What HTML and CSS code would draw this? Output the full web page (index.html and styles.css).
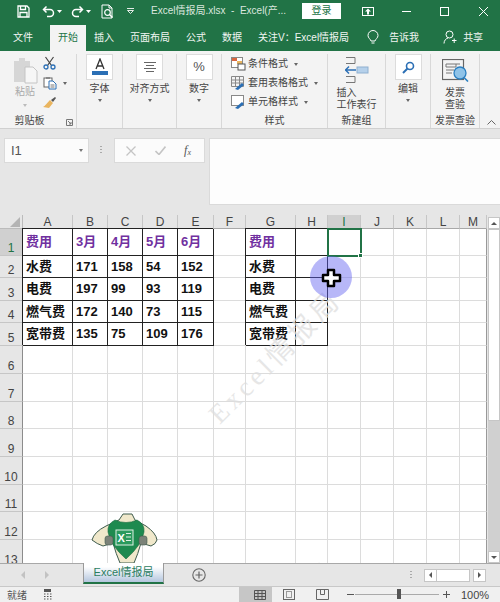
FILE: index.html
```html
<!DOCTYPE html>
<html lang="zh-CN">
<head>
<meta charset="utf-8">
<title>Excel情报局</title>
<link rel="stylesheet" href="styles.css">
</head>
<body>
<div class="app">
  <header class="titlebar">
    <svg class="qa save" width="13" height="13" viewBox="0 0 13 13"><path d="M1 1h9l2 2v9H1z M3.500 1v3.500h5V1 M3 12V7.500h7V12" fill="none" stroke="#fff" stroke-width="1.300"/></svg>
    <svg class="qa undo" width="13" height="13" viewBox="0 0 13 13"><path d="M4.500 1.500L1.500 4.500l3 3 M1.500 4.500H8a3.500 3.500 0 0 1 0 7H5" fill="none" stroke="#fff" stroke-width="1.500"/></svg>
    <svg class="qa mini" width="5" height="3" viewBox="0 0 5 3"><path d="M0 0h5L2.500 3z" fill="#fff"/></svg>
    <svg class="qa redo" width="13" height="13" viewBox="0 0 13 13"><path d="M8.500 1.500l3 3-3 3 M11.500 4.500H5a3.500 3.500 0 0 0 0 7h3" fill="none" stroke="#fff" stroke-width="1.500"/></svg>
    <svg class="qa mini" width="5" height="3" viewBox="0 0 5 3"><path d="M0 0h5L2.500 3z" fill="#fff"/></svg>
    <svg class="qa prev" width="13" height="15" viewBox="0 0 13 15"><path d="M8 1H1v13h10V4z M8 1v3h3" fill="none" stroke="#fff"/><circle cx="6.500" cy="8.500" r="2.800" fill="none" stroke="#fff" stroke-width="1.200"/><path d="M8.500 10.500l3 3" stroke="#fff" stroke-width="1.500"/></svg>
    <svg class="qa drop" width="7" height="6" viewBox="0 0 7 6"><path d="M0 .5h7M.5 2.500h6L3.500 5.500z" fill="none" stroke="#e4ece7"/></svg>
    <span class="doc">Excel情报局.xlsx&nbsp; - &nbsp;Excel(产...</span>
    <span class="login">登录</span>
    <svg class="win w1" width="12" height="9" viewBox="0 0 12 9"><rect x=".5" y=".5" width="11" height="8" fill="none" stroke="#fff"/><path d="M6 1.500l3 3H7v3H5v-3H3z" fill="#fff"/></svg>
    <svg class="win w2" width="9" height="1" viewBox="0 0 9 1"><rect width="9" height="1" fill="#fff"/></svg>
    <svg class="win w3" width="9" height="9" viewBox="0 0 9 9"><rect x=".5" y=".5" width="8" height="8" fill="none" stroke="#fff"/></svg>
    <svg class="win w4" width="9" height="9" viewBox="0 0 9 9"><path d="M0 0l9 9M9 0L0 9" stroke="#fff"/></svg>
  </header>

  <nav class="tabs">
    <span class="tab">文件</span>
    <span class="tab active">开始</span>
    <span class="tab">插入</span>
    <span class="tab">页面布局</span>
    <span class="tab">公式</span>
    <span class="tab">数据</span>
    <span class="tab">关注V：Excel情报局</span>
    <div class="tabs-right">
      <svg width="12" height="15" viewBox="0 0 12 15"><path d="M4 11C3.500 9 1 8 1 5.500a5 5 0 0 1 10 0C11 8 8.500 9 8 11z M4.500 13h3" fill="none" stroke="#fff"/></svg>
      <span class="tell">告诉我</span>
      <svg class="person" width="14" height="14" viewBox="0 0 14 14"><circle cx="6.500" cy="4.500" r="3.500" fill="none" stroke="#fff"/><path d="M1 13.500c0-3 2-5 4-5.500M9 10.500h4.500M11.200 8.500v4.500" fill="none" stroke="#fff"/></svg>
      <span class="share">共享</span>
    </div>
  </nav>

  <section class="ribbon">
    <div class="group g1">
      <div class="body clip">
        <div class="paste">
          <svg width="25" height="27" viewBox="0 0 25 27"><path d="M1 4h5V1h6v3h5v21H1z" fill="#d6d6d6"/><path d="M12 10h8l4 4v12H12z" fill="#f6f6f6" stroke="#c4c4c4"/></svg>
          <span class="lbl dim">粘贴</span>
          <i class="caret dimc"></i>
        </div>
        <div class="minis">
          <div class="mini-row"><svg width="13" height="14" viewBox="0 0 13 14"><path d="M2.500 1L8.500 9.500M10.500 1L4.500 9.500" stroke="#444" stroke-width="1.200"/><circle cx="3" cy="11" r="2" fill="none" stroke="#2b6fb5" stroke-width="1.300"/><circle cx="10" cy="11" r="2" fill="none" stroke="#2b6fb5" stroke-width="1.300"/></svg></div>
          <div class="mini-row"><svg width="14" height="13" viewBox="0 0 14 13"><rect x="1" y="1" width="8" height="9" fill="#fff" stroke="#666"/><rect x="3" y="0" width="4" height="2" fill="#888"/><path d="M6 4h4l3 3v5H6z" fill="#fff" stroke="#2b6fb5"/><path d="M7.500 8h4M7.500 10h4" stroke="#777"/></svg><i class="caret side"></i></div>
          <div class="mini-row"><svg width="13" height="12" viewBox="0 0 13 12"><path d="M8 3L12 0l1 1-3 4z" fill="#555"/><path d="M7 3l3 3-4 5-6-1c2-1 4-4 7-7z" fill="#e9b45e"/></svg></div>
        </div>
      </div>
      <div class="glabel launcher-row">剪贴板<svg class="launcher" width="7" height="7" viewBox="0 0 7 7"><path d="M.5 6.500v-6h6v6z M2 2l3 3M5 3v2H3" fill="none" stroke="#777"/></svg></div>
    </div>
    <div class="group g2">
      <div class="body col">
        <div class="box"><svg width="18" height="18" viewBox="0 0 18 18"><path d="M5 11L9 1l4 10M6.500 8h5" fill="none" stroke="#333" stroke-width="1.300"/><rect x="1" y="13" width="16" height="4" fill="#2b6fb5"/></svg></div>
        <span class="lbl">字体</span>
        <i class="caret"></i>
      </div>
    </div>
    <div class="group g3">
      <div class="body col">
        <div class="box"><svg width="14" height="10" viewBox="0 0 14 10"><path d="M1 .5h12M3 3.500h8M1 6.500h12M3 9.500h8" stroke="#666"/></svg></div>
        <span class="lbl">对齐方式</span>
        <i class="caret"></i>
      </div>
    </div>
    <div class="group g4">
      <div class="body col">
        <div class="box pct">%</div>
        <span class="lbl">数字</span>
        <i class="caret"></i>
      </div>
    </div>
    <div class="group g5">
      <div class="body stack">
        <div class="style-row"><svg width="15" height="14" viewBox="0 0 15 14"><rect x=".5" y=".5" width="11" height="10" fill="#fff" stroke="#888"/><rect x="1" y="1" width="5" height="3" fill="#d9663f"/><rect x="6" y="4" width="5" height="3" fill="#e9b45e"/><rect x="7" y="7" width="7" height="6" fill="#fff" stroke="#555"/></svg>条件格式<i class="caret inline"></i></div>
        <div class="style-row"><svg width="15" height="14" viewBox="0 0 15 14"><path d="M.5.500h12v10H.5z M.5 4h12M.5 7h12M4.500.5v10M8.500.5v10" fill="none" stroke="#888"/><path d="M4 13l7-6 2 2-6 5z" fill="#2b6fb5"/></svg>套用表格格式<i class="caret inline"></i></div>
        <div class="style-row"><svg width="15" height="14" viewBox="0 0 15 14"><rect x=".5" y=".5" width="12" height="10" fill="#fff" stroke="#888"/><path d="M4 13l7-6 2 2-6 5z" fill="#2b6fb5"/></svg>单元格样式<i class="caret inline"></i></div>
      </div>
      <div class="glabel">样式</div>
    </div>
    <div class="group g6">
      <div class="body col">
        <svg class="ins" width="24" height="26" viewBox="0 0 24 26"><path d="M1 .5h9v6H1M1 19.500h9v6H1" fill="none" stroke="#777"/><rect x="12" y="10" width="11" height="6" fill="#b5d0ea" stroke="#8fb0d0"/><path d="M0 13h11M4 9.500L.5 13 4 16.500" fill="none" stroke="#2b6fb5" stroke-width="1.500"/></svg>
        <span class="lbl two">插入<br>工作表行</span>
      </div>
      <div class="glabel">新建组</div>
    </div>
    <div class="group g7">
      <div class="body col">
        <div class="box"><svg width="13" height="13" viewBox="0 0 13 13"><circle cx="8" cy="5" r="3.500" fill="none" stroke="#2b6fb5" stroke-width="1.600"/><path d="M5.500 7.500L1 12" stroke="#2b6fb5" stroke-width="2"/></svg></div>
        <span class="lbl">编辑</span>
        <i class="caret"></i>
      </div>
    </div>
    <div class="group g8">
      <div class="body col">
        <svg class="inv" width="27" height="23" viewBox="0 0 27 23"><rect x=".5" y=".5" width="21" height="20" fill="#f4f4f4" stroke="#666" stroke-width="1.200"/><path d="M4 5h14M4 5v3h10V5M4 11h8M4 14h6" fill="none" stroke="#777"/><circle cx="18" cy="14" r="6" fill="#8fc3e8" stroke="#2b7fc0" stroke-width="1.300"/><path d="M22 18.500l4 4" stroke="#2b7fc0" stroke-width="1.600"/></svg>
        <span class="lbl two">发票<br>查验</span>
      </div>
      <div class="glabel">发票查验</div>
    </div>
    <div class="group g9">
      <svg class="collapse" width="9" height="5" viewBox="0 0 9 5"><path d="M.5 4.500l4-4 4 4" fill="none" stroke="#666"/></svg>
    </div>
  </section>

  <section class="fbar">
    <div class="namebox"><span>I1</span><i class="caret dark"></i></div>
    <div class="vdots"></div>
    <div class="fbuttons">
      <svg width="10" height="10" viewBox="0 0 10 10"><path d="M.5.500l9 9M9.500.5l-9 9" stroke="#c4c4c4" stroke-width="1.300"/></svg>
      <svg width="11" height="9" viewBox="0 0 11 9"><path d="M.5 5l3.500 3.500L10.500.5" fill="none" stroke="#c4c4c4" stroke-width="1.600"/></svg>
      <span class="fx">f<sub>x</sub></span>
    </div>
    <div class="finput"></div>
  </section>

  <section class="sheetwrap">
    <div class="sheet">
      <div class="grid">
        <div class="corner"><svg width="10" height="10" viewBox="0 0 10 10"><path d="M10 0v10H0z" fill="#b4b4b4"/></svg></div><div class="ch">A</div><div class="ch">B</div><div class="ch">C</div><div class="ch">D</div><div class="ch">E</div><div class="ch">F</div><div class="ch">G</div><div class="ch">H</div><div class="ch on">I</div><div class="ch">J</div><div class="ch">K</div><div class="ch">L</div><div class="ch">M</div>

        <div class="rh on">1</div><div class="c t h">费用</div><div class="c t h">3月</div><div class="c t h">4月</div><div class="c t h">5月</div><div class="c t h">6月</div><div class="c"></div><div class="c t h">费用</div><div class="c t"></div><div class="c"></div><div class="c"></div><div class="c"></div><div class="c"></div><div class="c"></div>
        <div class="rh">2</div><div class="c t">水费</div><div class="c t">171</div><div class="c t">158</div><div class="c t">54</div><div class="c t">152</div><div class="c"></div><div class="c t">水费</div><div class="c t"></div><div class="c"></div><div class="c"></div><div class="c"></div><div class="c"></div><div class="c"></div>
        <div class="rh">3</div><div class="c t">电费</div><div class="c t">197</div><div class="c t">99</div><div class="c t">93</div><div class="c t">119</div><div class="c"></div><div class="c t">电费</div><div class="c t"></div><div class="c"></div><div class="c"></div><div class="c"></div><div class="c"></div><div class="c"></div>
        <div class="rh">4</div><div class="c t">燃气费</div><div class="c t">172</div><div class="c t">140</div><div class="c t">73</div><div class="c t">115</div><div class="c"></div><div class="c t">燃气费</div><div class="c t"></div><div class="c"></div><div class="c"></div><div class="c"></div><div class="c"></div><div class="c"></div>
        <div class="rh">5</div><div class="c t">宽带费</div><div class="c t">135</div><div class="c t">75</div><div class="c t">109</div><div class="c t">176</div><div class="c"></div><div class="c t">宽带费</div><div class="c t"></div><div class="c"></div><div class="c"></div><div class="c"></div><div class="c"></div><div class="c"></div>
        <div class="rh">6</div><div class="c"></div><div class="c"></div><div class="c"></div><div class="c"></div><div class="c"></div><div class="c"></div><div class="c"></div><div class="c"></div><div class="c"></div><div class="c"></div><div class="c"></div><div class="c"></div><div class="c"></div>
        <div class="rh">7</div><div class="c"></div><div class="c"></div><div class="c"></div><div class="c"></div><div class="c"></div><div class="c"></div><div class="c"></div><div class="c"></div><div class="c"></div><div class="c"></div><div class="c"></div><div class="c"></div><div class="c"></div>
        <div class="rh">8</div><div class="c"></div><div class="c"></div><div class="c"></div><div class="c"></div><div class="c"></div><div class="c"></div><div class="c"></div><div class="c"></div><div class="c"></div><div class="c"></div><div class="c"></div><div class="c"></div><div class="c"></div>
        <div class="rh">9</div><div class="c"></div><div class="c"></div><div class="c"></div><div class="c"></div><div class="c"></div><div class="c"></div><div class="c"></div><div class="c"></div><div class="c"></div><div class="c"></div><div class="c"></div><div class="c"></div><div class="c"></div>
        <div class="rh">10</div><div class="c"></div><div class="c"></div><div class="c"></div><div class="c"></div><div class="c"></div><div class="c"></div><div class="c"></div><div class="c"></div><div class="c"></div><div class="c"></div><div class="c"></div><div class="c"></div><div class="c"></div>
        <div class="rh">11</div><div class="c"></div><div class="c"></div><div class="c"></div><div class="c"></div><div class="c"></div><div class="c"></div><div class="c"></div><div class="c"></div><div class="c"></div><div class="c"></div><div class="c"></div><div class="c"></div><div class="c"></div>
        <div class="rh">12</div><div class="c"></div><div class="c"></div><div class="c"></div><div class="c"></div><div class="c"></div><div class="c"></div><div class="c"></div><div class="c"></div><div class="c"></div><div class="c"></div><div class="c"></div><div class="c"></div><div class="c"></div>
        <div class="rh">13</div><div class="c"></div><div class="c"></div><div class="c"></div><div class="c"></div><div class="c"></div><div class="c"></div><div class="c"></div><div class="c"></div><div class="c"></div><div class="c"></div><div class="c"></div><div class="c"></div><div class="c"></div>
      </div>

      <span class="mark mark-a">Excel情报局</span>
      <span class="mark mark-b">Excel情报局</span>
      <div class="select"><i class="handle"></i></div>
      <div class="halo"></div>
      <svg class="cross" width="21" height="20" viewBox="0 0 21 20"><path d="M7 2h6v5h6v6h-6v5H7v-5H2V7h5z" fill="#fff" stroke="#000" stroke-width="2.500" stroke-linejoin="round"/></svg>
      <svg class="mascot" width="68" height="50" viewBox="0 0 68 50">
        <path d="M33 1h9l3 6 11 6q10 7 11 14-1 4-6 6l-10-3q-3 11-7 20H30q-4-9-7-20l-10 3q-6-2-11-6 2-8 14-14l13-6z" fill="#f0e8cb" stroke="#3f5c4e"/>
        <path d="M25 7q11 5 22 0 8 4 7 12-2 13-18 27Q20 32 18 19q-1-8 7-12z" fill="#1e8a4f" stroke="#176a3d" stroke-width=".6"/>
        <rect x="26" y="17" width="17" height="15" fill="#2a9a5d" stroke="#dff0e5"/>
        <text x="27.500" y="29" class="mx">X</text>
        <path d="M36 20.500h5M36 24h5M36 27.500h5" stroke="#dff0e5"/>
        <rect x="15" y="23" width="8" height="9" rx="2.500" fill="#7b8278" stroke="#3f5c4e" stroke-width=".6"/>
        <rect x="49" y="23" width="8" height="9" rx="2.500" fill="#7b8278" stroke="#3f5c4e" stroke-width=".6"/>
      </svg>
    </div>
    <aside class="vscroll">
      <div class="sbtn"><i class="up"></i></div>
      <div class="thumb"></div>
      <div class="track"></div>
      <div class="sbtn"><i class="down"></i></div>
    </aside>
  </section>

  <section class="tabbar">
    <i class="nav-l"></i><i class="nav-r"></i>
    <div class="sheettab">Excel情报局</div>
    <svg class="plus" width="14" height="14" viewBox="0 0 14 14"><circle cx="7" cy="7" r="6.200" fill="none" stroke="#666" stroke-width="1.100"/><path d="M3.500 7h7M7 3.500v7" stroke="#666" stroke-width="1.200"/></svg>
    <div class="hdots"></div>
    <div class="hbtn"><i class="left"></i></div>
    <div class="hthumb"></div>
    <div class="hbtn gap"><i class="right"></i></div>
  </section>

  <footer class="status">
    <span class="ready">就绪</span>
    <svg class="macro" width="9" height="11" viewBox="0 0 9 11"><rect x="1" y="0" width="7" height="3" fill="#555"/><path d="M1 5h1.500M4 5h1.500M7 5h1.500M1 7.500h1.500M4 7.500h1.500M7 7.500h1.500M1 10h1.500M4 10h1.500M7 10h1.500" stroke="#555"/></svg>
    <div class="viewbtn"><svg width="12" height="10" viewBox="0 0 12 10"><path d="M.5.500h11v9H.5z M.5 3.500h11M.5 6.500h11M4 .5v9M8 .5v9" fill="none" stroke="#555"/></svg></div>
    <svg class="v2" width="12" height="11" viewBox="0 0 12 11"><rect x=".5" y=".5" width="11" height="10" fill="none" stroke="#666"/><rect x="3.500" y="2.500" width="5" height="6" fill="none" stroke="#999"/></svg>
    <svg class="v3" width="13" height="11" viewBox="0 0 13 11"><path d="M.5.500h12v10H.5z M4.500.5v5h4v-5" fill="none" stroke="#666"/></svg>
    <svg class="zminus" width="7" height="1" viewBox="0 0 7 1"><rect width="7" height="1" fill="#555"/></svg>
    <div class="slider"><i></i></div>
    <svg class="zplus" width="7" height="7" viewBox="0 0 7 7"><path d="M0 3.500h7M3.500 0v7" stroke="#555"/></svg>
    <span class="zoomv">100%</span>
  </footer>
</div>
</body>
</html>
```

FILE: styles.css
```css
* { box-sizing: border-box; }
html, body { margin: 0; padding: 0; }
body {
  width: 500px; height: 602px; overflow: hidden; background: #e6e6e6;
  font-family: "Liberation Sans", "Noto Sans CJK SC", sans-serif; color: #444;
}
i { display: block; font-style: normal; }
svg { display: block; flex: none; }
.app { display: flex; flex-direction: column; width: 500px; height: 602px; }

/* title bar */
.titlebar { height: 25px; background: #217346; display: flex; align-items: center; color: #fff; padding-bottom: 3px; }
.save { margin-left: 17px; }
.undo { margin-left: 12px; }
.mini { margin-left: 2px; }
.redo { margin-left: 9px; }
.prev { margin-left: 10px; }
.drop { margin-left: 13px; }
.doc { margin-left: 17px; font-size: 10px; line-height: 14px; color: #dbe7df; white-space: pre; width: 137px; }
.login { margin-left: 14px; width: 39px; height: 16px; background: #fff; color: #217346; font-size: 10px; line-height: 16px; text-align: center; }
.w1 { margin-left: 21px; }
.w2 { margin-left: 28px; }
.w3 { margin-left: 29px; }
.w4 { margin-left: 30px; }

/* tabs */
.tabs { height: 26px; background: #217346; display: flex; align-items: stretch; padding-left: 5px; color: #f1f6f3; font-size: 10px; line-height: 25px; }
.tab { padding: 0 8px; white-space: nowrap; }
.tab:first-child { margin-right: 9px; }
.tab.active { background: #f3f3f3; color: #217346; }
.tabs-right { display: flex; align-items: center; padding-bottom: 2px; margin-left: 10px; }
.tell { margin-left: 10px; }
.person { margin-left: 24px; }
.share { margin-left: 6px; }

/* ribbon */
.ribbon { height: 78px; background: #f3f3f3; border-bottom: 1px solid #d0d0d0; display: flex; font-size: 10px; color: #444; line-height: 12px; }
.group { display: flex; flex-direction: column; position: relative; margin: 3px 0 0; border-right: 1px solid #d8d8d8; }
.g1 { width: 77px; } .g2 { width: 46px; } .g3 { width: 54px; } .g4 { width: 45px; }
.g5 { width: 106px; } .g6 { width: 58px; } .g7 { width: 45px; } .g8 { width: 49px; }
.g9 { width: 20px; border-right: 0; justify-content: flex-end; align-items: center; padding: 0 0 3px 3px; }
.body { flex: 1; min-height: 0; }
.col { display: flex; flex-direction: column; align-items: center; }
.clip { display: flex; padding-left: 12px; }
.box { width: 27px; height: 26px; background: #fff; border: 1px solid #dcdcdc; display: flex; align-items: center; justify-content: center; flex: none; }
.pct { font-size: 13px; color: #555; }
.lbl { margin-top: 3px; white-space: nowrap; line-height: 12px; }
.dim { color: #aaa; margin-top: 2px; }
.caret { width: 0; height: 0; border: 2.500px solid transparent; border-top: 3px solid #666; border-bottom: 0; margin-top: 4px; }
.dimc { border-top-color: #bbb; margin-top: 6px; }
.glabel { height: 14px; line-height: 14px; text-align: center; flex: none; white-space: nowrap; }
.launcher-row { position: relative; padding-right: 17px; }
.launcher { position: absolute; right: 3px; top: 5px; }
.paste { display: flex; flex-direction: column; align-items: center; width: 26px; padding-top: 3px; }
.minis { display: flex; flex-direction: column; margin-left: 5px; gap: 6px; padding-top: 2px; }
.mini-row { display: flex; align-items: center; height: 14px; }
.side { margin: 0 0 0 6px; }
.stack { display: flex; flex-direction: column; padding: 3px 0 0 9px; gap: 5px; }
.style-row { display: flex; align-items: center; gap: 2px; height: 14px; white-space: nowrap; }
.inline { margin: 0 0 0 4px; }
.ins { margin-top: 3px; }
.inv { margin-top: 5px; }
.g8 .lbl { margin-top: 5px; }
.g6 .lbl { margin-top: 4px; }

/* formula bar */
.fbar { height: 86px; background: #e6e6e6; display: flex; align-items: flex-start; padding: 9px 0 0 4px; }
.namebox { width: 85px; height: 25px; background: #fbfbfb; border: 1px solid #dadada; display: flex; align-items: center; justify-content: space-between; padding: 0 5px 0 6px; font-size: 13px; color: #555; }
.dark { margin: 0; border-top-color: #777; }
.vdots { width: 2px; height: 9px; margin: 8px 12px 0 11px; background: repeating-linear-gradient(#aaa 0 1px, transparent 1px 3px); }
.fbuttons { width: 91px; height: 25px; background: #fbfbfb; border: 1px solid #dadada; display: flex; align-items: center; justify-content: space-between; padding: 0 13px 0 11px; }
.fx { font: italic 12px "Liberation Serif", serif; color: #555; }
.fx sub { font-size: 8px; vertical-align: -1px; line-height: 0; }
.finput { flex: 1; margin-left: 4px; height: 67px; background: #fdfdfd; border: 1px solid #dadada; border-right: 0; }

/* sheet */
.sheetwrap { height: 348px; display: flex; }
.sheet { position: relative; width: 487px; height: 348px; overflow: hidden; background: #fff; }
.grid {
  display: grid;
  grid-template-columns: 23px 50px 35px 35px 35px 36px 32px 50px 32px 33px 33px 33px 33px 27px;
  grid-template-rows: 14px 27px 22px 23px 22px 23px 28px 28px 27px 28px 28px 27px 28px 28px;
  font-size: 13px;
}
.corner { background: #e6e6e6; border-right: 1px solid #bbb; border-bottom: 1px solid #bbb; display: flex; align-items: flex-end; justify-content: flex-end; padding: 0 2px 1px 0; }
.ch { background: #e6e6e6; border-right: 1px solid #c6c6c6; border-bottom: 1px solid #a8a8a8; font-size: 12px; line-height: 14px; text-align: center; color: #444; }
.rh { background: #e6e6e6; border-right: 1px solid #8c8c8c; border-bottom: 1px solid #c6c6c6; font-size: 12px; line-height: 14px; display: flex; align-items: flex-end; justify-content: center; color: #444; }
.ch.on { background: #d0d0d0; color: #217346; }
.rh.on { background: #d0d0d0; color: #217346; border-right: 1px solid #217346; }
.c { border-right: 1px solid #dcdcdc; border-bottom: 1px solid #dcdcdc; display: flex; align-items: center; padding-left: 3px; font-weight: 700; color: #111; white-space: nowrap; overflow: hidden; line-height: 14px; }
.t { border-right-color: #222; border-bottom-color: #222; box-shadow: -1px -1px 0 #222; overflow: visible; }
.h { color: #7030a0; }
.grid > .c:nth-child(14n) { border-right-color: #999; }
.mark { position: absolute; transform: translate(-50%, -50%) rotate(-45deg); font-family: "Liberation Serif", "Noto Sans CJK SC", serif; font-size: 27px; line-height: 30px; letter-spacing: 4px; color: #dedede; white-space: nowrap; pointer-events: none; opacity: .75; }
.mark-a { left: 275px; top: 142px; }
.mark-b { left: 272px; top: 412px; }
.select { position: absolute; left: 327px; top: 13px; width: 35px; height: 29px; border: 2px solid #217346; }
.handle { position: absolute; right: -3px; bottom: -3px; width: 5px; height: 5px; background: #217346; border: 1px solid #fff; }
.halo { position: absolute; left: 310px; top: 41px; width: 42px; height: 42px; border-radius: 50%; background: rgba(96, 96, 240, .45); }
.cross { position: absolute; left: 321px; top: 53px; }
.mascot { position: absolute; left: 90px; top: 298px; }
.mx { font: 700 11px "Liberation Sans", sans-serif; fill: #fff; }

/* vertical scrollbar */
.vscroll { width: 13px; background: #e6e6e6; padding: 2px 0 0 1px; display: flex; flex-direction: column; }
.sbtn { height: 12px; background: #fff; border: 1px solid #c6c6c6; display: flex; align-items: center; justify-content: center; flex: none; }
.up { border: 3px solid transparent; border-bottom: 3px solid #555; border-top: 0; }
.down { border: 3px solid transparent; border-top: 3px solid #555; border-bottom: 0; }
.thumb { height: 192px; background: #fff; border: 1px solid #c6c6c6; flex: none; }
.track { flex: 1; background: #d0d0d0; }

/* sheet tabs */
.tabbar { height: 23px; background: #e6e6e6; display: flex; align-items: center; border-top: 1px solid #a8a8a8; position: relative; }
.nav-l { margin-left: 21px; border: 4px solid transparent; border-right: 4px solid #c2c2c2; border-left: 0; }
.nav-r { margin-left: 20px; border: 4px solid transparent; border-left: 4px solid #c2c2c2; border-right: 0; }
.sheettab { margin-left: 34px; align-self: flex-start; margin-top: -1px; width: 81px; height: 21px; background: linear-gradient(#fff, #fff 20%, #b4c6de); border-left: 1px solid #9a9a9a; border-right: 1px solid #9a9a9a; border-bottom: 2px solid #217346; color: #2b7d5f; font-size: 11px; line-height: 19px; text-align: center; }
.plus { margin-left: 28px; }
.hdots { width: 2px; height: 9px; margin-left: 204px; background: repeating-linear-gradient(#aaa 0 1px, transparent 1px 3px); }
.hbtn { margin-left: 12px; width: 13px; height: 13px; background: #fff; border: 1px solid #c6c6c6; display: flex; align-items: center; justify-content: center; }
.hbtn.gap { margin-left: 3px; }
.left { border: 3px solid transparent; border-right: 3px solid #555; border-left: 0; }
.right { border: 3px solid transparent; border-left: 3px solid #555; border-right: 0; }
.hthumb { width: 33px; height: 13px; background: #fff; border: 1px solid #c6c6c6; border-left: 0; }

/* status bar */
.status { height: 16px; background: #f0f0f0; border-top: 1px solid #c8c8c8; display: flex; align-items: center; font-size: 10px; color: #555; }
.ready { margin-left: 7px; width: 20px; }
.macro { margin-left: 16px; }
.viewbtn { margin-left: 187px; width: 33px; height: 15px; background: #c6c6c6; display: flex; align-items: center; justify-content: flex-end; padding-right: 6px; }
.v2 { margin-left: 11px; }
.v3 { margin-left: 21px; }
.zminus { margin-left: 18px; }
.slider { margin-left: 1px; width: 84px; height: 1px; background: #aaa; position: relative; }
.slider i { position: absolute; left: 42px; top: -5px; width: 4px; height: 10px; background: #555; }
.zplus { margin-left: 4px; }
.zoomv { margin-left: 11px; font-size: 11px; color: #444; }
```
